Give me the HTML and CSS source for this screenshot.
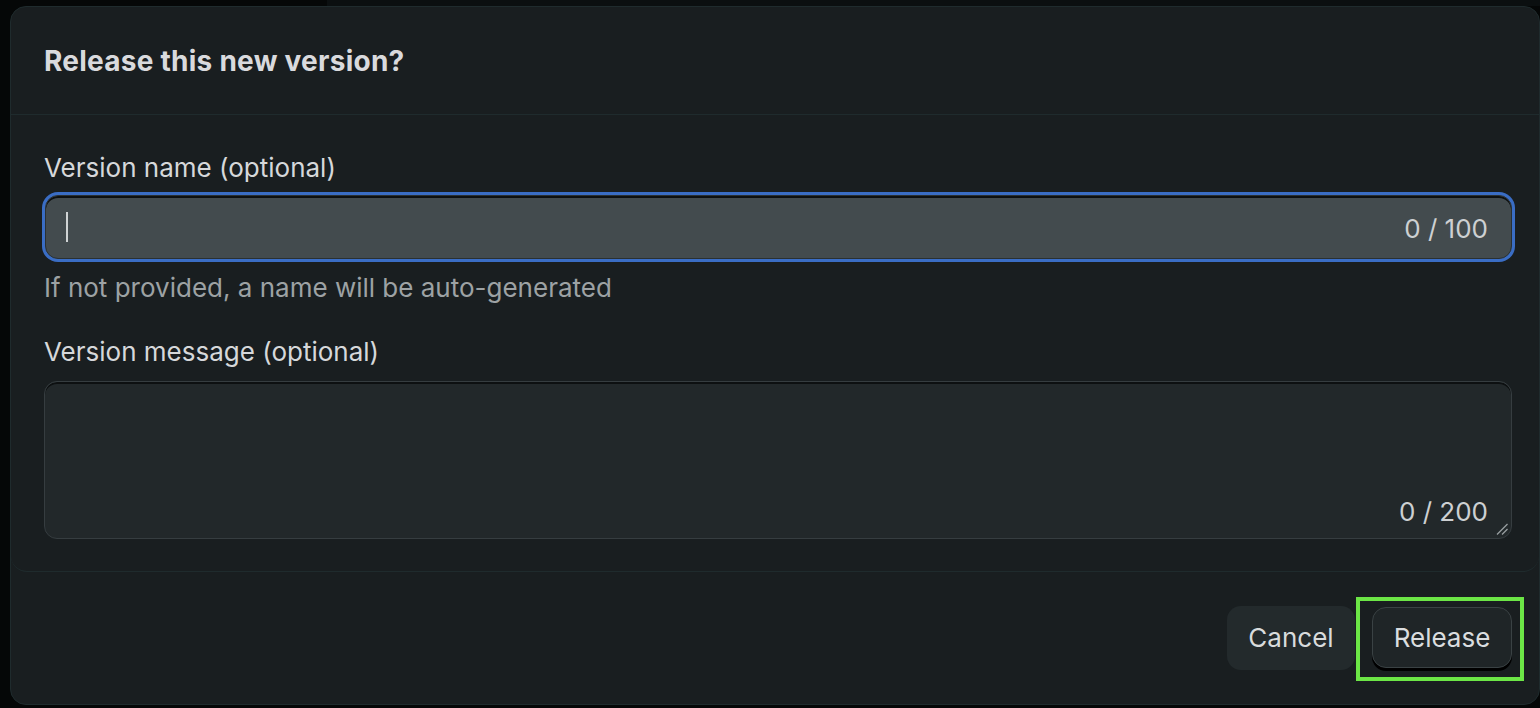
FILE: index.html
```html
<!DOCTYPE html>
<html lang="en">
<head>
<meta charset="utf-8">
<title>Release this new version?</title>
<link rel="stylesheet" href="styles.css">
</head>
<body>
<div class="backdrop">
  <div class="modal" role="dialog" aria-labelledby="dlg-title">
    <header class="modal-header">
      <h2 id="dlg-title" class="modal-title">Release this new version?</h2>
    </header>
    <section class="modal-body">
      <label class="field-label">Version name (optional)</label>
      <div class="text-input is-focused">
        <span class="caret"></span>
        <span class="counter">0 / 100</span>
      </div>
      <p class="hint">If not provided, a name will be auto-generated</p>
      <label class="field-label field-label--second">Version message (optional)</label>
      <div class="text-area">
        <span class="counter">0 / 200</span>
        <svg class="resize-grip" width="14" height="14" viewBox="0 0 14 14" aria-hidden="true">
          <line x1="2" y1="12.5" x2="12.5" y2="2" stroke="#9aa0a2" stroke-width="1.3"/>
          <line x1="7" y1="12.5" x2="12.5" y2="7" stroke="#9aa0a2" stroke-width="1.3"/>
        </svg>
      </div>
    </section>
    <footer class="modal-footer">
      <button class="btn btn-cancel" type="button">Cancel</button>
      <span class="highlight-wrap">
        <button class="btn btn-release" type="button">Release</button>
        <span class="highlight-box" aria-hidden="true"></span>
      </span>
    </footer>
  </div>
</div>
</body>
</html>
```

FILE: styles.css
```css
* { box-sizing: border-box; }

html, body {
  margin: 0;
  padding: 0;
  height: 100%;
}

body {
  font-family: Inter, "Noto Sans", "Liberation Sans", sans-serif;
  background: #050707;
  overflow: hidden;
}

.backdrop {
  height: 708px;
  padding: 6px 0 0 10px;
  background:
    linear-gradient(to right, #050707 0, #050707 327px, #0b0f10 327px, #0b0f10 100%) top / 100% 6px no-repeat,
    #050707;
}

.modal {
  width: 1530px;
  height: 699px;
  background: #191e20;
  border: 1px solid #1f2b2d;
  border-radius: 16px;
  display: flex;
  flex-direction: column;
  overflow: hidden;
}

.modal-header {
  height: 108px;
  flex: none;
  display: flex;
  align-items: center;
  padding: 0 33px;
  border-bottom: 1px solid #1f2b2d;
}

.modal-title {
  margin: 0;
  font-size: 28px;
  line-height: 34px;
  font-weight: 700;
  letter-spacing: 0.25px;
  color: #d9dadd;
}

.modal-body {
  flex: none;
  padding: 37px 27px 32px 33px;
  border-bottom: 1px solid #1f2b2d;
  border-radius: 0 0 16px 16px;
  display: flex;
  flex-direction: column;
}

.field-label {
  display: block;
  font-size: 26px;
  line-height: 32px;
  color: #d6d8da;
}

.field-label--second {
  margin-top: 32px;
}

.text-input {
  margin-top: 11px;
  height: 64px;
  margin-left: 1px;
  background: #434b4e;
  border-radius: 13px;
  border: 1px solid #2a3133;
  box-shadow: inset 0 2px 0 #0d1011, 0 0 0 3px #3a6dc4;
  display: flex;
  align-items: center;
  justify-content: space-between;
  padding: 0 23px 0 20px;
}

.caret {
  width: 2px;
  height: 30px;
  background: #cfd3d4;
}

.counter {
  font-size: 26px;
  line-height: 32px;
  color: #cdd0d2;
}

.text-input .counter {
  margin-top: 3px;
}

.hint {
  margin: 13px 0 0;
  font-size: 26px;
  line-height: 32px;
  color: #9da2a4;
}

.text-area {
  position: relative;
  margin-top: 13px;
  height: 158px;
  background: #22282a;
  border: 1px solid #363d40;
  border-radius: 13px;
  box-shadow: inset 0 2px 0 #0d1011;
  display: flex;
  align-items: flex-end;
  justify-content: flex-end;
  padding: 0 23px 10px 0;
}

.resize-grip {
  position: absolute;
  right: 2px;
  bottom: 2px;
}

.modal-footer {
  flex: 1;
  display: flex;
  align-items: center;
  justify-content: flex-end;
  gap: 17px;
  padding: 0 27px 0 33px;
}

.btn {
  font-family: inherit;
  font-size: 26px;
  line-height: 32px;
  border-radius: 14px;
  cursor: pointer;
  padding: 0;
}

.btn-cancel {
  width: 128px;
  height: 64px;
  border: none;
  background: #232a2c;
  color: #d8dbdc;
}

.highlight-wrap {
  position: relative;
  display: inline-flex;
}

.btn-release {
  width: 140px;
  height: 61px;
  margin-bottom: 2px;
  padding-top: 2px;
  border: 1px solid #3a4244;
  background: #1f2527;
  color: #dadddf;
  box-shadow: 0 3px 0 #000;
}

.highlight-box {
  position: absolute;
  left: -16px;
  right: -12px;
  top: -10px;
  bottom: -11px;
  border: 4px solid #6ce646;
  pointer-events: none;
}
```
